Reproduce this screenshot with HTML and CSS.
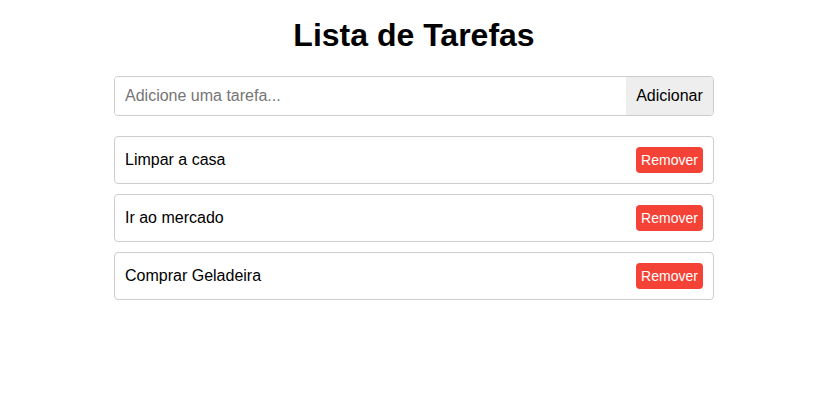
FILE: index.html
```html
<!DOCTYPE html>
<html lang="pt">
<head>
<meta charset="utf-8">
<title>Lista de Tarefas</title>
<link rel="stylesheet" href="styles.css">
</head>
<body>
<div class="container">
  <h1 class="title">Lista de Tarefas</h1>
  <div class="add-row">
    <input class="add-input" type="text" placeholder="Adicione uma tarefa...">
    <button class="add-btn">Adicionar</button>
  </div>
  <ul class="tasks">
    <li class="task"><span>Limpar a casa</span><button class="remove-btn">Remover</button></li>
    <li class="task"><span>Ir ao mercado</span><button class="remove-btn">Remover</button></li>
    <li class="task"><span>Comprar Geladeira</span><button class="remove-btn">Remover</button></li>
  </ul>
</div>
</body>
</html>
```

FILE: styles.css
```css
html, body {
  margin: 0;
  padding: 0;
  background: #fff;
}
body {
  font-family: "Liberation Sans", Arial, sans-serif;
  color: #000;
  padding-right: 4px;
}
.container {
  width: 600px;
  margin: 0 auto;
  padding-top: 17px;
}
.title {
  margin: 0 0 22px;
  font-size: 32px;
  line-height: 37px;
  font-weight: bold;
  text-align: center;
}
.add-row {
  display: flex;
  height: 40px;
  box-sizing: border-box;
  border: 1px solid #ccc;
  border-radius: 4px;
  overflow: hidden;
}
.add-input {
  flex: 1;
  border: none;
  outline: none;
  padding: 0 10px;
  font-family: inherit;
  font-size: 16px;
  color: #000;
  background: #fff;
}
.add-input::placeholder {
  color: #757575;
}
.add-btn {
  width: 87px;
  border: none;
  background: #eee;
  font-family: inherit;
  font-size: 16px;
  color: #000;
  padding: 0;
}
.tasks {
  list-style: none;
  margin: 20px 0 0;
  padding: 0;
  display: flex;
  flex-direction: column;
  gap: 10px;
}
.task {
  display: flex;
  align-items: center;
  justify-content: space-between;
  height: 48px;
  box-sizing: border-box;
  padding: 0 10px;
  border: 1px solid #ccc;
  border-radius: 4px;
  font-size: 16px;
}
.remove-btn {
  background: #f44336;
  color: #fff;
  border: none;
  border-radius: 4px;
  font-family: inherit;
  font-size: 14px;
  padding: 0 5px;
  height: 26px;
  width: 67px;
}
```
